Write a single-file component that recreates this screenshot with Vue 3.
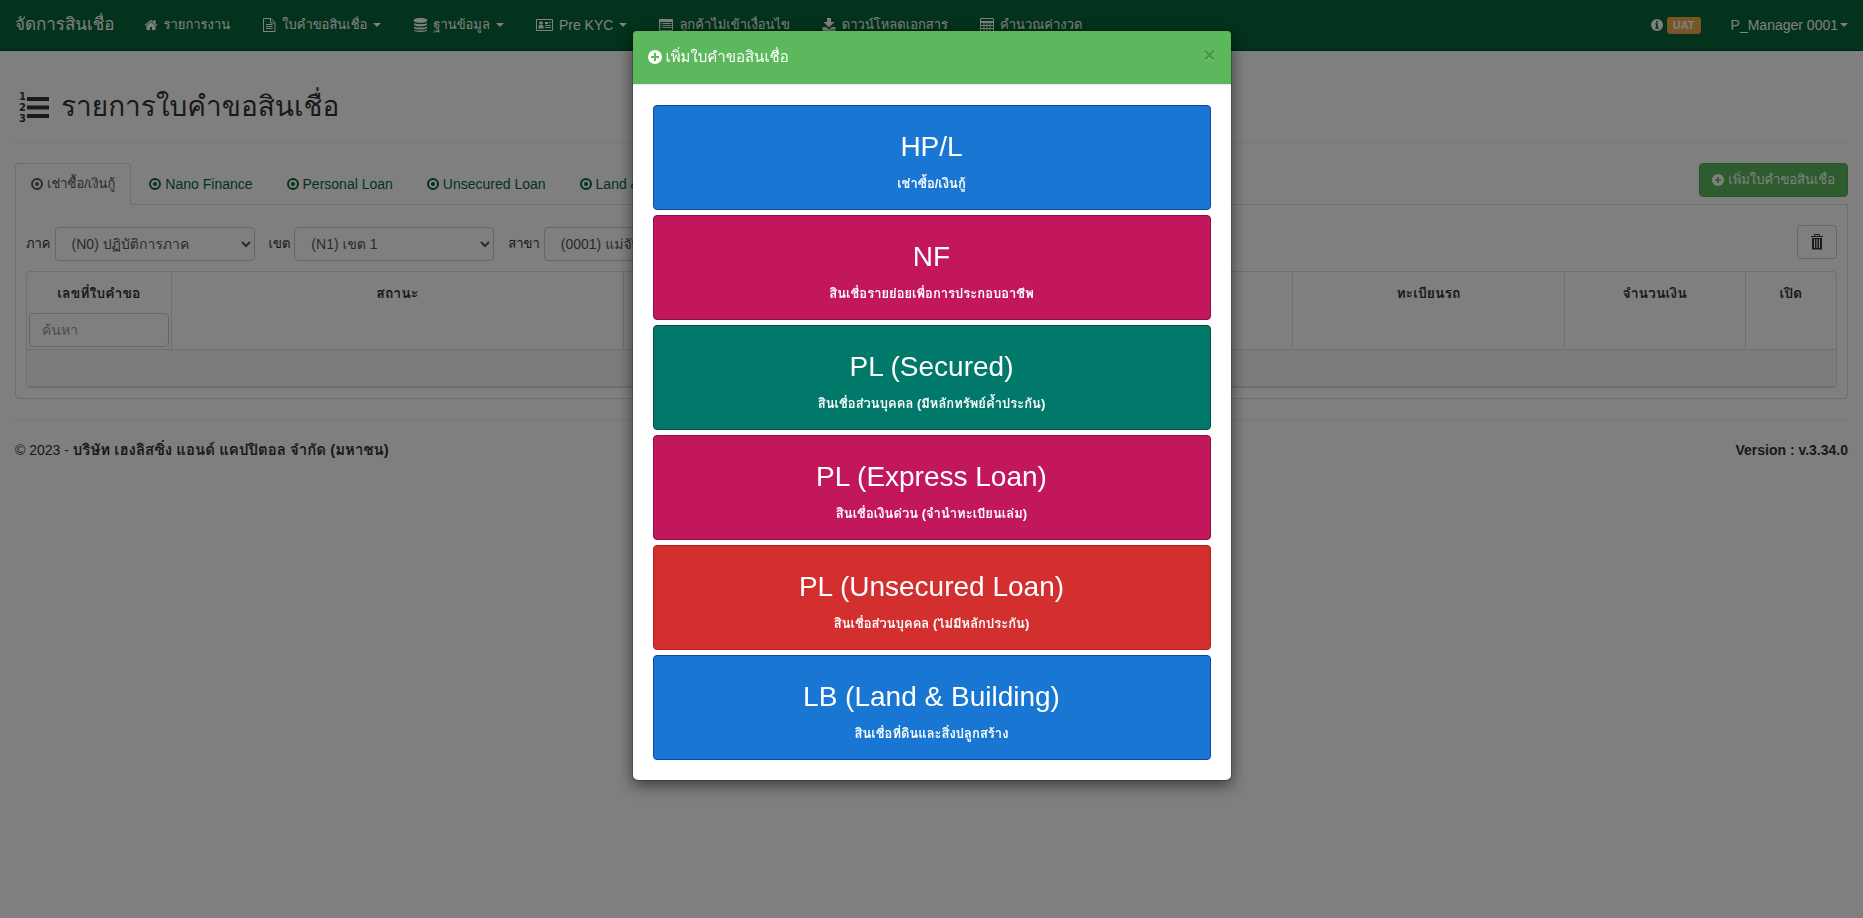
<script setup>
import { ref } from 'vue'

const menu = [
  { icon: 'home', label: 'รายการงาน', thai: true },
  { icon: 'file', label: 'ใบคำขอสินเชื่อ', thai: true, caret: true },
  { icon: 'database', label: 'ฐานข้อมูล', thai: true, caret: true },
  { icon: 'card', label: 'Pre KYC', caret: true },
  { icon: 'list', label: 'ลูกค้าไม่เข้าเงื่อนไข', thai: true },
  { icon: 'download', label: 'ดาวน์โหลดเอกสาร', thai: true },
  { icon: 'calc', label: 'คำนวณค่างวด', thai: true }
]
const tabs = [
  { label: 'เช่าซื้อ/เงินกู้', thai: true },
  { label: 'Nano Finance' },
  { label: 'Personal Loan' },
  { label: 'Unsecured Loan' },
  { label: 'Land & Building' }
]
const filters = [
  { id: 'region', label: 'ภาค', value: '(N0) ปฏิบัติการภาค' },
  { id: 'zone', label: 'เขต', value: '(N1) เขต 1' },
  { id: 'branch', label: 'สาขา', value: '(0001) แม่จัน' }
]
const products = [
  { name: 'HP/L', detail: 'เช่าซื้อ/เงินกู้', tone: 'blue' },
  { name: 'NF', detail: 'สินเชื่อรายย่อยเพื่อการประกอบอาชีพ', tone: 'pink' },
  { name: 'PL (Secured)', detail: 'สินเชื่อส่วนบุคคล (มีหลักทรัพย์ค้ำประกัน)', tone: 'teal' },
  { name: 'PL (Express Loan)', detail: 'สินเชื่อเงินด่วน (จำนำทะเบียนเล่ม)', tone: 'pink' },
  { name: 'PL (Unsecured Loan)', detail: 'สินเชื่อส่วนบุคคล (ไม่มีหลักประกัน)', tone: 'red' },
  { name: 'LB (Land & Building)', detail: 'สินเชื่อที่ดินและสิ่งปลูกสร้าง', tone: 'blue' }
]
const activeTab = ref(0)
const open = ref(true)
const search = ref('')
</script>

<template>
  <div class="page">
    <nav class="navbar">
      <a class="brand" href="#">จัดการสินเชื่อ</a>
      <ul class="menu">
        <li v-for="item in menu" :key="item.label">
          <a href="#" class="nav-link">
            <svg v-if="item.icon === 'home'" class="icon" viewBox="0 0 1792 1792"><path d="M1472 992v480q0 26-19 45t-45 19h-384v-384h-256v384h-384q-26 0-45-19t-19-45v-480q0-1 .5-3t.5-3l575-474 575 474q1 2 1 6zm223-69l-62 74q-8 9-21 11h-3q-13 0-21-7l-692-577-692 577q-12 8-24 7-13-2-21-11l-62-74q-8-10-7-23.500t11-21.500l719-599q32-26 76-26t76 26l244 204v-195q0-14 9-23t23-9h192q14 0 23 9t9 23v408l219 182q10 8 11 21.500t-7 23.500z" /></svg>
            <svg v-else-if="item.icon === 'file'" class="icon" viewBox="0 0 14 14"><path d="M1.500 .5h7.500L13 4.500V13.500H1.500zM8.500 .5V5H13" class="line" /><path d="M4 6h6.500v1H4zM4 8h6.500v1H4zM4 10h6.500v1H4z" /></svg>
            <svg v-else-if="item.icon === 'database'" class="icon" viewBox="0 0 14 14"><path d="M1 2C1-.6 14-.6 14 2v1C14 5.400 1 5.400 1 3zM1 5c2 1.600 11 1.600 13 0v1.400c0 2.400-13 2.400-13 0zM1 8.400c2 1.600 11 1.600 13 0v1.400c0 2.400-13 2.400-13 0zM1 11.600c2 1.600 11 1.600 13 0v.4c0 2.600-13 2.600-13 0z" /></svg>
            <svg v-else-if="item.icon === 'card'" class="icon card" viewBox="0 0 17 14"><path d="M.5 1.500h16v11H.5z" class="line" /><circle cx="5" cy="5" r="1.800" /><path d="M2.500 10.500V8.500Q2.500 7 4 7H6Q7.500 7 7.500 8.500V10.500zM9 4h3v2H9zM13 4h2v1h-2zM9 7h6v1H9zM9 9h6v1H9zM2 12h3v1H2zM12 12h3v1h-3z" /></svg>
            <svg v-else-if="item.icon === 'list'" class="icon" viewBox="0 0 14 14"><path d="M.5 1.500h13v11H.5z" class="line" /><path d="M.5 1h13v3H.5zM3.500 5h9v1h-9zM3.500 7h9v1h-9zM3.500 9h9v1h-9zM1.500 5h1v1h-1zM1.500 7h1v1h-1zM1.500 9h1v1h-1z" /></svg>
            <svg v-else-if="item.icon === 'download'" class="icon" viewBox="0 0 14 14"><path d="M5 0h4v4h3.500L7 9.500 1.500 4H5zM.5 9H4l3 2.500L10 9h3.500v4H.5z" /><path d="M9.500 11h1v1h-1zM11.500 11h1v1h-1z" class="hole" /></svg>
            <svg v-else class="icon" viewBox="0 0 14 14"><path d="M.5 .5h13v13H.5zM.5 4.500h13M.5 7.500h13M.5 10.500h13M4 4.500v9M7 4.500v9M10 4.500v9M1 3.500h12" class="line" /></svg>
            <span :class="{ th: item.thai }">{{ item.label }}</span>
            <i v-if="item.caret" class="caret"></i>
          </a>
        </li>
      </ul>
      <div class="nav-right">
        <a href="#" class="env">
          <svg class="icon small" viewBox="0 0 14 14"><circle cx="7" cy="7" r="7" /><path d="M6 2h2v2H6zM5 5h3v5h1v1.500H5V10h1V6.500H5z" class="hole" /></svg>
          <span class="badge">UAT</span>
        </a>
        <a href="#" class="user">P_Manager 0001<i class="caret"></i></a>
      </div>
    </nav>

    <main class="container">
      <h2 class="title">
        <svg class="title-icon" viewBox="0 0 30 32"><path d="M8 6h22v4H8zM8 14.500h22v4H8zM8 23h22v4H8z" /><text x="0" y="9">1</text><text x="0" y="20">2</text><text x="0" y="31">3</text></svg>
        <span>รายการใบคำขอสินเชื่อ</span>
      </h2>

      <div class="tab-bar">
        <ul class="tabs">
          <li v-for="(tab, i) in tabs" :key="tab.label">
            <a href="#" :class="{ active: i === activeTab }" @click.prevent="activeTab = i">
              <svg class="icon small" viewBox="0 0 12 12"><circle cx="6" cy="6" r="5" class="ring" /><circle cx="6" cy="6" r="2" /></svg>
              <span :class="{ th: tab.thai }">{{ tab.label }}</span>
            </a>
          </li>
        </ul>
        <button type="button" class="btn add" @click="open = true">
          <svg class="icon small" viewBox="0 0 14 14"><circle cx="7" cy="7" r="7" /><path d="M6 3.500h2V6h2.500v2H8v2.500H6V8H3.500V6H6z" class="hole" /></svg>
          <span class="th">เพิ่มใบคำขอสินเชื่อ</span>
        </button>
      </div>

      <section class="panel">
        <div class="filters">
          <div v-for="f in filters" :key="f.id" class="field">
            <label :for="f.id" class="th">{{ f.label }}</label>
            <select :id="f.id" class="control"><option>{{ f.value }}</option></select>
          </div>
          <button type="button" class="btn trash" aria-label="ลบ">
            <svg class="icon trash-icon" viewBox="0 0 14 16"><path d="M4.500 2V.5h5V2" class="line" /><path d="M1 2h12v1H1zM2 4h10v11.500H2z" /><path d="M4 5h1v9H4zM6.500 5h1v9h-1zM9 5h1v9H9z" class="slit" /></svg>
          </button>
        </div>
        <table class="grid">
          <colgroup><col class="c-no"><col class="c-status"><col><col class="c-plate"><col class="c-amount"><col class="c-open"></colgroup>
          <thead>
            <tr>
              <th><label for="search">เลขที่ใบคำขอ</label><input id="search" v-model="search" class="control" type="text" placeholder="ค้นหา"></th>
              <th>สถานะ</th>
              <th></th>
              <th>ทะเบียนรถ</th>
              <th>จำนวนเงิน</th>
              <th>เปิด</th>
            </tr>
          </thead>
          <tbody><tr><td colspan="6"></td></tr></tbody>
        </table>
      </section>

      <footer class="footer">
        <span>© 2023 - <b class="company">บริษัท เฮงลิสซิ่ง แอนด์ แคปปิตอล จำกัด (มหาชน)</b></span>
        <b>Version : v.3.34.0</b>
      </footer>
    </main>

    <div v-if="open" class="backdrop">
      <div class="modal" role="dialog" aria-labelledby="modal-title">
        <header class="modal-header">
          <h4 id="modal-title">
            <svg class="icon" viewBox="0 0 14 14"><circle cx="7" cy="7" r="7" /><path d="M6 3h2v3h3v2H8v3H6V8H3V6h3z" class="hole" /></svg>
            <span>เพิ่มใบคำขอสินเชื่อ</span>
          </h4>
          <button type="button" class="close" aria-label="ปิด" @click="open = false">×</button>
        </header>
        <div class="modal-body">
          <button v-for="p in products" :key="p.name" type="button" class="product" :class="p.tone">
            <span class="product-name">{{ p.name }}</span>
            <b class="th">{{ p.detail }}</b>
          </button>
        </div>
      </div>
    </div>
  </div>
</template>

<style>
body {
  margin: 0;
  background: #fff;
}
</style>

<style scoped>
.page {
  font: 14px/20px "Liberation Sans", Arial, Tahoma, Loma, "Noto Sans Thai Looped", "Noto Sans Thai", sans-serif;
  color: #333;
}
.page * {
  box-sizing: border-box;
}
.page .th {
  font-size: 13px;
}
a {
  text-decoration: none;
}
ul {
  list-style: none;
  margin: 0;
  padding: 0;
}
button, select, input {
  font: inherit;
}
.icon {
  width: 14px;
  height: 14px;
  flex: none;
  fill: currentColor;
}
.icon.small {
  width: 12px;
  height: 12px;
}
.icon.card {
  width: 17px;
}
.icon .line, .icon .ring {
  fill: none;
  stroke: currentColor;
  stroke-width: 1;
}
.icon .ring {
  stroke-width: 2;
}
.caret {
  border-top: 4px solid;
  border-left: 4px solid transparent;
  border-right: 4px solid transparent;
}

.navbar {
  display: flex;
  align-items: center;
  height: 51px;
  padding: 0 15px;
  background: #066638;
  border-bottom: 1px solid #044425;
  color: #fff;
}
.navbar a {
  color: #fff;
  white-space: nowrap;
}
.navbar .hole {
  fill: #066638;
}
.brand {
  font-size: 17px;
  font-weight: 500;
  margin-right: 13px;
}
.menu {
  display: flex;
}
.nav-link {
  display: flex;
  align-items: center;
  gap: 6px;
  padding: 15px 16px;
}
.nav-right {
  display: flex;
  gap: 30px;
  margin-left: auto;
}
.env {
  display: flex;
  align-items: center;
  gap: 4px;
}
.badge {
  padding: 2px 6px;
  border-radius: 3px;
  background: #f0ad4e;
  font-size: 11px;
  font-weight: 700;
  line-height: 13px;
}
.user {
  display: flex;
  align-items: center;
  gap: 2px;
}

.container {
  padding: 0 15px;
}
.title {
  display: flex;
  align-items: center;
  gap: 12px;
  height: 92px;
  margin: 0 0 20px;
  padding: 20px 4px 0;
  border-bottom: 1px solid #eee;
  font-size: 28px;
  font-weight: 500;
  line-height: 40px;
}
.title-icon {
  width: 30px;
  height: 32px;
  overflow: visible;
  fill: currentColor;
  font: 700 10px "DejaVu Sans", sans-serif;
}

.tab-bar {
  display: flex;
  justify-content: space-between;
  align-items: flex-start;
  height: 41px;
}
.tabs {
  display: flex;
  gap: 2px;
}
.tabs a {
  display: flex;
  align-items: center;
  gap: 4px;
  height: 42px;
  padding: 0 15px;
  border: 1px solid transparent;
  border-radius: 4px 4px 0 0;
  color: #066638;
  white-space: nowrap;
}
.tabs a.active {
  position: relative;
  background: #fff;
  border-color: #ddd #ddd #fff;
  color: #555;
}
.btn {
  display: flex;
  align-items: center;
  gap: 4px;
  height: 34px;
  padding: 0 12px;
  border: 1px solid #ccc;
  border-radius: 4px;
  background: #fff;
  color: #333;
}
.add {
  background: #5cb85c;
  border-color: #4cae4c;
  color: #fff;
}
.add .hole, .modal-header .hole {
  fill: #5cb85c;
}
.slit {
  fill: #fff;
}

.panel {
  padding: 20px 10px 10px;
  border: 1px solid #ddd;
  border-radius: 0 0 4px 4px;
}
.filters {
  display: flex;
  gap: 14px;
  margin-bottom: 10px;
  padding-top: 2px;
}
.field {
  display: flex;
  align-items: center;
  gap: 4px;
}
.control {
  height: 34px;
  padding: 6px 12px;
  border: 1px solid #ccc;
  border-radius: 4px;
  background: #fff;
  color: #555;
}
.control::placeholder {
  color: #999;
}
select.control {
  width: 200px;
}
.trash {
  margin: -2px 0 0 auto;
}
.trash-icon {
  height: 16px;
}

.grid {
  width: 100%;
  table-layout: fixed;
  border: 1px solid #ddd;
  border-radius: 4px;
  border-spacing: 0;
}
.c-no {
  width: 8%;
}
.c-status {
  width: 25%;
}
.c-plate {
  width: 15%;
}
.c-amount {
  width: 10%;
}
.c-open {
  width: 5%;
}
.grid th {
  padding: 11px 2px 2px;
  border-right: 1px solid #ddd;
  vertical-align: top;
}
.grid th:last-child {
  border-right: 0;
}
.grid label {
  display: block;
  margin-bottom: 10px;
}
.grid input {
  display: block;
  width: 100%;
  font-weight: 400;
}
.grid td {
  height: 38px;
  padding: 0;
  border-top: 1px solid #ddd;
  border-bottom: 1px solid #ddd;
  background: #f9f9f9;
}

.footer {
  display: flex;
  justify-content: space-between;
  margin-top: 20px;
  padding-top: 20px;
  border-top: 1px solid #eee;
}
.company {
  font-size: 15px;
}

.backdrop {
  position: fixed;
  inset: 0;
  overflow: auto;
  background: rgba(0, 0, 0, .5);
}
.modal {
  max-width: 600px;
  margin: 30px auto;
  border: 1px solid rgba(0, 0, 0, .2);
  border-radius: 6px;
  background: #fff;
  background-clip: padding-box;
  box-shadow: 0 5px 15px rgba(0, 0, 0, .5);
}
.modal-header {
  display: flex;
  justify-content: space-between;
  align-items: flex-start;
  height: 54px;
  padding: 15px;
  border-bottom: 1px solid #e5e5e5;
  border-radius: 4px 4px 0 0;
  background: #5cb85c;
  color: #fff;
}
.modal-header h4 {
  display: flex;
  align-items: center;
  gap: 4px;
  margin: 0;
  font-size: 15px;
  font-weight: 500;
  line-height: 22px;
}
.close {
  padding: 0;
  border: 0;
  background: none;
  color: #000;
  font-size: 21px;
  font-weight: 700;
  line-height: 18px;
  opacity: .2;
  text-shadow: 0 1px 0 #fff;
}
.modal-body {
  display: flex;
  flex-direction: column;
  gap: 5px;
  padding: 20px;
}
.product {
  height: 105px;
  padding: 14px 12px 6px;
  border: 1px solid;
  border-radius: 4px;
  color: #fff;
}
.product-name {
  display: block;
  margin-bottom: 10px;
  font-size: 28px;
  line-height: 33px;
}
.blue {
  background: #1976d2;
  border-color: #0d47a1;
}
.pink {
  background: #c2185b;
  border-color: #880e4f;
}
.teal {
  background: #00796b;
  border-color: #004d40;
}
.red {
  background: #d32f2f;
  border-color: #b71c1c;
}
</style>
